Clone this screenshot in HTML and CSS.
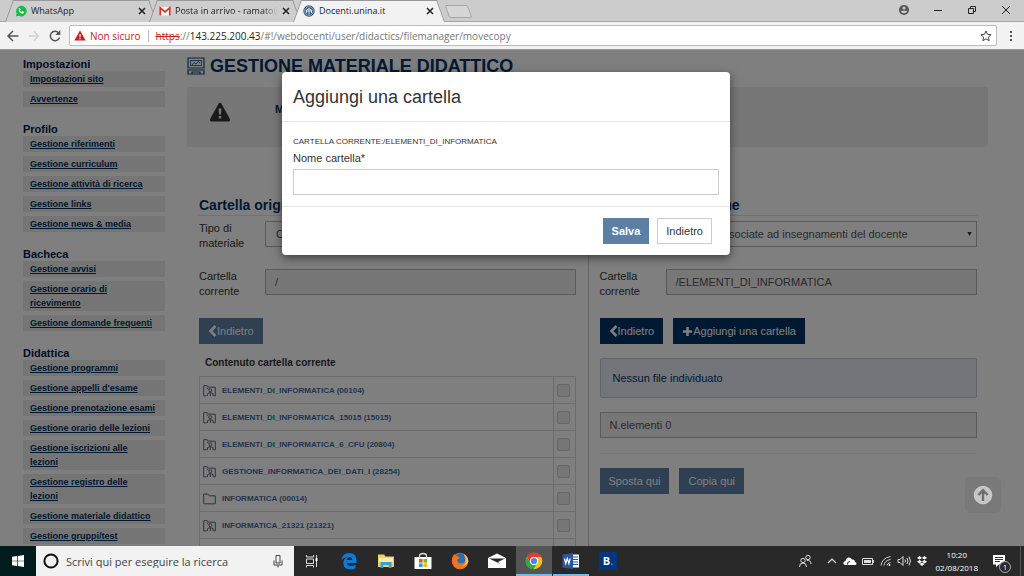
FILE: index.html
```html
<!DOCTYPE html>
<html lang="it">
<head>
<meta charset="utf-8">
<title>Docenti.unina.it</title>
<link rel="stylesheet" href="styles.css">
</head>
<body>
<svg class="defs" aria-hidden="true">
  <symbol id="x" viewBox="0 0 8 8"><path d="M1 1l6 6M7 1l-6 6" stroke="currentColor" stroke-width="1.5"/></symbol>
  <symbol id="folder" viewBox="0 0 13 13"><path d="M.7 11.8V2h4l1.300 1.800h6.300v8z" fill="none" stroke="currentColor"/></symbol>
  <symbol id="folder-user" viewBox="0 0 13 13"><path d="M3.500 11.800H.7V1.700h3.600l1 1.500h7v8.600h-1.800M4 3.500l1.300 2" fill="none" stroke="currentColor"/><circle cx="7.300" cy="6.200" r="1.500" fill="none" stroke="currentColor"/><path d="M4.500 12V9.700q2.800-2.500 5.600 0V12M7.300 8.500V12" fill="none" stroke="currentColor"/></symbol>
  <symbol id="chev" viewBox="0 0 9 12"><path d="M7.500 1L2.500 6l5 5" fill="none" stroke="currentColor" stroke-width="2.600"/></symbol>
</svg>
<div class="browser">
  <header class="tabs">
    <div class="tab">
      <svg class="fav" viewBox="0 0 12 12"><path d="M.8 11.500l.9-3A5.300 5.300 0 1 1 3.800 10.700z" fill="#12bf45"/><path d="M3.700 3.400l1-.5.9 1.700-.6.8q.5 1.200 1.700 1.600l.8-.8 1.600.9q-.3 1.700-2 1.500Q3.800 8 3.700 3.400z" fill="#fff"/></svg>
      <span class="tab-title">WhatsApp</span>
      <button class="tab-close" aria-label="Chiudi WhatsApp"><svg><use href="#x"/></svg></button>
    </div>
    <div class="tab">
      <svg class="fav" viewBox="0 0 12 12"><path d="M.5 2h11v8.500H.5z" fill="#f4f4f4"/><path d="M1.200 10.500V2.800L6 6.800l4.800-4v7.700" fill="none" stroke="#d8372b" stroke-width="1.700"/></svg>
      <span class="tab-title fade">Posta in arrivo - ramato@</span>
      <button class="tab-close" aria-label="Chiudi Posta in arrivo"><svg><use href="#x"/></svg></button>
    </div>
    <div class="tab active">
      <svg class="fav" viewBox="0 0 12 12"><circle cx="6" cy="6" r="5.700" fill="#34587c"/><circle cx="6" cy="6" r="4.300" fill="none" stroke="#b9cbdc" stroke-width=".7"/><path d="M3.500 8V5q2.500-2.500 5 0v3M6 3v6.500M4 6h4" fill="none" stroke="#dce6ef"/></svg>
      <span class="tab-title">Docenti.unina.it</span>
      <button class="tab-close" aria-label="Chiudi Docenti.unina.it"><svg><use href="#x"/></svg></button>
    </div>
    <button class="new-tab" aria-label="Nuova scheda"></button>
    <div class="window-controls">
      <button aria-label="Profilo"><svg viewBox="0 0 12 12"><circle cx="6" cy="6" r="5" fill="#555"/><circle cx="6" cy="4" r="1.500" fill="#ccc"/><path d="M2.800 6.800h6.400Q8.500 9.300 6 9.300T2.800 6.800z" fill="#ccc"/></svg></button>
      <button aria-label="Riduci"><svg viewBox="0 0 12 12"><path d="M2 6.500h8" stroke="#222"/></svg></button>
      <button aria-label="Ripristina"><svg viewBox="0 0 12 12"><path d="M2.500 4.500h5v5h-5zM4.500 4.500v-2h5v5h-2" fill="none" stroke="#222"/></svg></button>
      <button aria-label="Chiudi"><svg viewBox="0 0 12 12"><path d="M2 2l8 8M10 2l-8 8" stroke="#222"/></svg></button>
    </div>
  </header>
  <nav class="toolbar" aria-label="Navigazione">
    <button aria-label="Indietro"><svg viewBox="0 0 14 14"><path d="M12.500 7H2M7 2L2 7l5 5" fill="none" stroke="#555" stroke-width="1.500"/></svg></button>
    <button aria-label="Avanti"><svg viewBox="0 0 14 14"><path d="M2 7h9.500M7 2.500L11.500 7 7 11.500" fill="none" stroke="#d2d2d2" stroke-width="1.500"/></svg></button>
    <button aria-label="Ricarica"><svg viewBox="0 0 14 14"><path d="M11.500 8.500A4.700 4.700 0 1 1 10.500 3.800" fill="none" stroke="#555" stroke-width="1.500"/><path d="M12.300 1v5h-5z" fill="#555"/></svg></button>
    <div class="address">
      <svg class="warn" viewBox="0 0 12 11"><path d="M6 .5l5.700 10H.3z" fill="#c5221f"/><path d="M6 4v3.200M6 8v1.300" stroke="#fff" stroke-width="1.200"/></svg>
      <span class="insecure">Non sicuro</span>
      <span class="url"><s>https</s>://<b>143.225.200.43</b>/#!/webdocenti/user/didactics/filemanager/movecopy</span>
      <button class="star" aria-label="Preferiti"><svg viewBox="0 0 12 12"><path d="M6 1l1.500 3.300 3.600.4-2.700 2.400.8 3.600L6 8.900l-3.200 1.800.8-3.600L.9 4.700l3.600-.4z" fill="none" stroke="#444"/></svg></button>
    </div>
    <button class="menu" aria-label="Menu"><svg viewBox="0 0 14 14"><path d="M6 2h2v2H6zM6 6h2v2H6zM6 10h2v2H6z" fill="#555"/></svg></button>
  </nav>

  <div class="viewport">
    <div class="page">
      <aside class="sidebar">
        <h2>Impostazioni</h2>
        <ul><li><a href="#">Impostazioni sito</a></li><li><a href="#">Avvertenze</a></li></ul>
        <h2>Profilo</h2>
        <ul><li><a href="#">Gestione riferimenti</a></li><li><a href="#">Gestione curriculum</a></li><li><a href="#">Gestione attività di ricerca</a></li><li><a href="#">Gestione links</a></li><li><a href="#">Gestione news &amp; media</a></li></ul>
        <h2>Bacheca</h2>
        <ul><li><a href="#">Gestione avvisi</a></li><li><a href="#">Gestione orario di ricevimento</a></li><li><a href="#">Gestione domande frequenti</a></li></ul>
        <h2>Didattica</h2>
        <ul><li><a href="#">Gestione programmi</a></li><li><a href="#">Gestione appelli d'esame</a></li><li><a href="#">Gestione prenotazione esami</a></li><li><a href="#">Gestione orario delle lezioni</a></li><li><a href="#">Gestione iscrizioni alle lezioni</a></li><li><a href="#">Gestione registro delle lezioni</a></li><li><a href="#">Gestione materiale didattico</a></li><li><a href="#">Gestione gruppi/test</a></li></ul>
      </aside>
      <main class="main">
        <h1><svg viewBox="0 0 18 18"><path d="M1 1h16v10H1zM1 13h16v4H1zM5 17v-2h8v2" fill="none" stroke="#1f497d" stroke-width="1.200"/><path d="M3.500 3.500h11v5h-11zM5 8l2-2.500L9 7l2-2.500L13 6" fill="none" stroke="#1f497d" stroke-width=".8"/></svg>GESTIONE MATERIALE DIDATTICO</h1>
        <div class="notice">
          <svg viewBox="0 0 22 20"><path d="M11 .7q.9 0 1.500 1l8.500 15.500q.8 2-1.200 2.200H2.200Q.2 19.200 1 17.200L9.500 1.700q.6-1 1.500-1z" fill="#333"/><path d="M9.600 6.500h2.800l-.4 6h-2zM9.800 14h2.400v2.400H9.800z" fill="#eee"/></svg>
          <strong>M</strong>
        </div>
        <div class="columns">
          <section class="col">
            <h3>Cartella origine</h3>
            <div class="field"><label for="t1">Tipo di materiale</label><select id="t1"><option>Cartelle associate ad insegnamenti del docente</option></select></div>
            <div class="field"><label for="c1">Cartella corrente</label><input id="c1" type="text" value="/" readonly></div>
            <div class="actions"><button class="btn soft"><svg class="chev"><use href="#chev"/></svg>Indietro</button></div>
            <table class="files">
              <caption>Contenuto cartella corrente</caption>
              <tbody>
              <tr><td><a href="#"><svg><use href="#folder-user"/></svg>ELEMENTI_DI_INFORMATICA (00104)</a></td><td><input type="checkbox" disabled aria-label="ELEMENTI_DI_INFORMATICA"></td></tr>
              <tr><td><a href="#"><svg><use href="#folder-user"/></svg>ELEMENTI_DI_INFORMATICA_15015 (15015)</a></td><td><input type="checkbox" disabled aria-label="ELEMENTI_DI_INFORMATICA_15015"></td></tr>
              <tr><td><a href="#"><svg><use href="#folder-user"/></svg>ELEMENTI_DI_INFORMATICA_6_CFU (20804)</a></td><td><input type="checkbox" disabled aria-label="ELEMENTI_DI_INFORMATICA_6_CFU"></td></tr>
              <tr><td><a href="#"><svg><use href="#folder-user"/></svg>GESTIONE_INFORMATICA_DEI_DATI_I (28254)</a></td><td><input type="checkbox" disabled aria-label="GESTIONE_INFORMATICA_DEI_DATI_I"></td></tr>
              <tr><td><a href="#"><svg><use href="#folder"/></svg>INFORMATICA (00014)</a></td><td><input type="checkbox" disabled aria-label="INFORMATICA"></td></tr>
              <tr><td><a href="#"><svg><use href="#folder-user"/></svg>INFORMATICA_21321 (21321)</a></td><td><input type="checkbox" disabled aria-label="INFORMATICA_21321"></td></tr>
              <tr><td></td><td></td></tr>
              </tbody>
            </table>
          </section>
          <section class="col">
            <h3>Cartella destinazione</h3>
            <div class="field"><label for="t2">Tipo di materiale</label><select id="t2"><option>Cartelle associate ad insegnamenti del docente</option></select></div>
            <div class="field"><label for="c2">Cartella corrente</label><input id="c2" type="text" value="/ELEMENTI_DI_INFORMATICA" readonly></div>
            <div class="actions"><button class="btn dark"><svg class="chev"><use href="#chev"/></svg>Indietro</button><button class="btn dark"><svg class="plus" viewBox="0 0 11 11"><path d="M5.500 1v9M1 5.500h9" stroke="currentColor" stroke-width="2.600"/></svg>Aggiungi una cartella</button></div>
            <p class="info">Nessun file individuato</p>
            <p class="count">N.elementi 0</p>
            <div class="actions final"><button class="btn soft">Sposta qui</button><button class="btn soft">Copia qui</button></div>
          </section>
        </div>
      </main>
    </div>
    <div class="overlay">
      <form class="modal" role="dialog" aria-labelledby="mt">
        <h2 id="mt">Aggiungi una cartella</h2>
        <div class="modal-body">
          <p>CARTELLA CORRENTE:/ELEMENTI_DI_INFORMATICA</p>
          <label for="nome">Nome cartella*</label>
          <input id="nome" type="text">
        </div>
        <div class="modal-footer"><button type="button" class="btn save">Salva</button><button type="button" class="btn plain">Indietro</button></div>
      </form>
    </div>
    <a class="to-top" href="#" aria-label="Torna su"><svg viewBox="0 0 20 20"><circle cx="10" cy="10" r="9.300" fill="#c6c6c6"/><path d="M10 16V5.500M5.300 10L10 5.300l4.700 4.700" fill="none" stroke="#6e6e6e" stroke-width="2.400"/></svg></a>
  </div>
</div>

<footer class="taskbar">
  <button class="start" aria-label="Start"><svg viewBox="0 0 12 12"><path d="M0 1.800l5.200-.7v4.600H0zM5.900 1L12 .1v5.600H5.900zM0 6.300h5.200v4.600L0 10.200zM5.900 6.300H12v5.600L5.900 11z" fill="#fff"/></svg></button>
  <label class="search">
    <svg class="cortana" viewBox="0 0 16 16"><circle cx="8" cy="8" r="6.600" fill="none" stroke="#111" stroke-width="2"/></svg>
    <input type="text" placeholder="Scrivi qui per eseguire la ricerca" aria-label="Cerca">
    <svg class="mic" viewBox="0 0 10 14"><path d="M3 1.500h4v7.500H3zM1 6.500V11h8V6.500M5 11v2.500" fill="none" stroke="#444"/></svg>
  </label>
  <div class="apps">
    <button aria-label="Visualizzazione attività"><svg viewBox="0 0 20 20"><path d="M4.500 4v2h7V4M4.500 8h7v4.500h-7zM4.500 16.500v-2h7v2M14.500 4v12" fill="none" stroke="#ddd"/><path d="M13.500 7h2v3h-2z" fill="#fff"/></svg></button>
    <button aria-label="Edge"><svg viewBox="0 0 20 20"><path d="M2.500 9Q3.500 2 10.200 2 17.500 2 17.500 9.500V12H7.800q.4 3 4 3 2.700 0 4.700-1.200v3.400Q14.500 18.500 11.500 18.500 4.500 18.500 4.300 12 4.300 8 8 6 4.500 6.300 2.500 9zM7.900 9h5.400Q13.200 6 10.600 6 8.200 6 7.900 9z" fill="#0c7bd8"/></svg></button>
    <button aria-label="Esplora file"><svg viewBox="0 0 20 20"><path d="M2 3.500h6l1.500 2H18V16H2z" fill="#f5ce62"/><path d="M3 7h14v4H3z" fill="#fce9ab"/><path d="M4.500 11h11v6h-2.800v-3H7.300v3H4.500z" fill="#35a0dd"/></svg></button>
    <button aria-label="Store"><svg viewBox="0 0 20 20"><path d="M1.500 6h17v12h-17z" fill="#fff"/><path d="M6.500 7V5q0-2.500 3.500-2.500T13.500 5v2" fill="none" stroke="#ddd" stroke-width="1.300"/><path d="M6 8h3.600v3.600H6z" fill="#e8502a"/><path d="M10.400 8H14v3.600h-3.600z" fill="#7eb900"/><path d="M6 12.400h3.600V16H6z" fill="#1fa3e8"/><path d="M10.400 12.400H14V16h-3.600z" fill="#fbb900"/></svg></button>
    <button aria-label="Firefox"><svg viewBox="0 0 20 20"><circle cx="10" cy="10" r="8.300" fill="#e8561b"/><circle cx="10.500" cy="8.500" r="6" fill="#2a6eb5"/><path d="M1.900 8Q3 4 4.500 3q.5 2 3 2.200L9.500 7 7 9q1 4 5 3.500 3-.5 3.500-4.500L14 3Q18.300 6 18.300 10.500 17 18.300 10 18.300T1.900 8z" fill="#ee7420"/><path d="M14 3Q18.300 6 18.300 10.500q-1.500 4.500-6.300 4.700 4.500-2 3.500-7.200z" fill="#fbc43a"/></svg></button>
    <button aria-label="Posta"><svg viewBox="0 0 20 20"><path d="M1 7l9-4.500L19 7v10H1z" fill="#fff"/><path d="M2 7.500h16l-7 3.500 2.500 2z" fill="#292929"/></svg></button>
    <button class="running current" aria-label="Chrome"><svg viewBox="0 0 20 20"><circle cx="10" cy="10" r="8.300" fill="#fbc116"/><path d="M2.800 5.900A8.300 8.300 0 0 1 17.200 6H10a4 4 0 0 0-3.500 6z" fill="#e33b2e"/><path d="M2.800 5.900A8.300 8.300 0 0 0 9.500 18.300L13.400 12a4 4 0 0 1-6.900 0z" fill="#2da94f"/><circle cx="10" cy="10" r="4" fill="#fff"/><circle cx="10" cy="10" r="3.100" fill="#4285f4"/></svg></button>
    <button class="running" aria-label="Word"><svg viewBox="0 0 20 20"><path d="M10 3.500h8v13h-8z" fill="#fff"/><path d="M12 6h5M12 8.500h5M12 11h5M12 13.500h5" stroke="#2b579a"/><path d="M1.500 3.500L12 2v16L1.500 16.500z" fill="#2b579a"/><path d="M3.500 7.500l1.200 5 1.600-5 1.600 5 1.300-5" fill="none" stroke="#fff" stroke-width="1.200"/></svg></button>
    <button aria-label="Booking"><span class="booking">B<i>.</i></span></button>
  </div>
  <div class="tray">
    <svg class="people" viewBox="0 0 16 16"><circle cx="6" cy="7.500" r="2.200" fill="none" stroke="#ddd"/><circle cx="11" cy="4.500" r="2.200" fill="none" stroke="#ddd"/><path d="M2.500 14q0-4 3.500-4t3.500 4M10 7.500q3.800-.5 4 3.500" fill="none" stroke="#ddd"/></svg>
    <svg viewBox="0 0 16 16"><path d="M4 10l4-4 4 4" fill="none" stroke="#ddd" stroke-width="1.200"/></svg>
    <svg viewBox="0 0 16 16"><path d="M3.500 12Q1 11.500 1.500 9.500 2 8 3.500 8 4 4.500 7 4.500q2 0 3 2 3-.3 3 2.500 2 .3 1.500 2-.5 1-1.500 1z" fill="#fff"/><path d="M5.500 11.500Q5 8.500 8 8.500" fill="none" stroke="#292929"/></svg>
    <svg viewBox="0 0 16 16"><path d="M2.500 5.500h10v6h-10zM13.500 7v3" fill="none" stroke="#ddd"/><path d="M4 7h7v3H4z" fill="#ddd"/></svg>
    <svg viewBox="0 0 16 16"><path d="M3 12.500Q4 5 12.500 3.500M6 12.500q.5-5 6.500-6M9 12.500q.3-2.500 3.500-3" fill="none" stroke="#ccc"/><circle cx="11.500" cy="12" r="1" fill="#ddd"/></svg>
    <svg viewBox="0 0 16 16"><path d="M2 6.500h2l3-3v9l-3-3H2zM9 6.500q1 1.500 0 3M11 5q2 3 0 6M13 3.500q3 4.500 0 9" fill="none" stroke="#ddd"/></svg>
    <svg viewBox="0 0 16 16"><path d="M5.500 3L8 5 5.500 6.600 3 5zM10.500 3L13 5l-2.500 1.600L8 5zM5.500 7L8 8.600l-2.500 1.800L3 8.800zM10.500 7L13 8.800l-2.500 1.600L8 8.600zM5.500 11L8 9.600l2.500 1.400L8 13z" fill="#fff"/></svg>
    <time class="clock" datetime="2018-08-02T10:20">10:20<br>02/08/2018</time>
    <button class="notifications" aria-label="Notifiche"><svg viewBox="0 0 14 14"><path d="M1 1h12v9.500H7L4 13v-2.500H1z" fill="#fff"/><path d="M3 3.500h8M3 5.500h8M3 7.500h5" stroke="#333"/></svg><span>1</span></button>
  </div>
</footer>
</body>
</html>
```

FILE: styles.css
```css
* { box-sizing: border-box; }
body { margin: 0; height: 100vh; display: flex; flex-direction: column; overflow: hidden; font: 11px/15px "Liberation Sans", Arial, sans-serif; color: #333; }
button { padding: 0; border: 0; background: none; font: inherit; color: inherit; }
input, select { font: inherit; color: inherit; }
h1, h2, h3, p, ul { margin: 0; padding: 0; }
svg { display: block; flex: none; }
.defs { position: absolute; width: 0; height: 0; }
.browser { flex: 1; min-height: 0; display: flex; flex-direction: column; }

/* Browser chrome */
.tabs { display: flex; height: 22px; padding-left: 9px; background: #ccc; border-bottom: 1px solid #a5a5a5; font: 9px/20px "Open Sans", "Noto Sans", sans-serif; color: #222; }
.tab { position: relative; isolation: isolate; display: flex; align-items: center; gap: 4px; flex: 0 1 144px; min-width: 0; height: 22px; padding: 0 7px 0 6px; }
.tab::before, .tab::after { content: ""; position: absolute; z-index: -1; inset: 0 40% 0 0; background: #cecece; border: 1px solid #999; border-right: 0; border-bottom: 0; transform: skewX(-20deg); }
.tab::after { inset: 0 0 0 40%; border: 1px solid #999; border-left: 0; border-bottom: 0; transform: skewX(20deg); }
.tab.active { z-index: 1; }
.tab.active::before, .tab.active::after { background: #f2f2f2; }
.fav { width: 12px; height: 12px; }
.tab-title { flex: 1; overflow: hidden; white-space: nowrap; }
.fade { mask-image: linear-gradient(90deg, #000 85%, transparent); }
.tab-close svg { width: 8px; height: 8px; }
.new-tab { width: 23px; height: 13px; margin: 5px 0 0 6px; background: #d6d6d6; border: 1px solid #a8a8a8; border-radius: 2px; transform: skewX(20deg); }
.window-controls { display: flex; align-items: center; gap: 22px; margin-left: auto; padding-right: 12px; height: 20px; }
.window-controls svg { width: 12px; height: 12px; }
.toolbar { display: flex; align-items: center; gap: 7px; height: 28px; padding: 0 6px; background: #f2f2f2; border-bottom: 1px solid #999; }
.toolbar svg { width: 14px; height: 14px; }
.address { flex: 1; min-width: 0; display: flex; align-items: center; height: 21px; padding: 0 4px; background: #fff; border: 1px solid #bbb; border-radius: 2px; font: 10px/18px "Open Sans", "Noto Sans", sans-serif; color: #777; white-space: nowrap; }
.toolbar .warn { width: 12px; height: 11px; }
.insecure { margin-left: 4px; padding-right: 7px; border-right: 1px solid #bbb; line-height: 12px; color: #c5221f; }
.url { flex: 1; padding-left: 7px; overflow: hidden; }
.url s { color: #c5221f; }
.url b { font-weight: 400; color: #222; }
.toolbar .star svg { width: 12px; height: 12px; }

/* Page */
.viewport { position: relative; flex: 1; min-height: 0; overflow: hidden; background: #fff; }
.page { display: flex; gap: 22px; padding: 7px 36px 0 23px; }
.sidebar { flex: 0 0 142px; font-size: 9px; font-weight: 700; line-height: 14px; }
.sidebar h2 { font-size: 11px; line-height: 14px; color: #002147; }
.sidebar ul { display: grid; gap: 4px; margin-bottom: 15px; list-style: none; }
.sidebar li { padding: 1px 7px; background: #ebebeb; }
.sidebar a { color: #00305f; text-decoration: underline; }
.main { flex: 1; min-width: 0; }
h1 { display: flex; align-items: center; gap: 5px; height: 18px; margin-bottom: 12px; font-size: 18px; line-height: 18px; color: #003366; }
h1 svg { width: 18px; height: 18px; }
.notice { display: flex; align-items: flex-start; gap: 44px; height: 60px; padding: 15px 22px; border-radius: 3px; background: #eee; color: #003366; }
.notice svg { width: 22px; height: 20px; }
.columns { display: grid; grid-template-columns: 1fr 1fr; margin-top: 48px; }
.col { min-width: 0; padding: 0 12px; }
.col + .col { border-left: 1px solid #ccc; padding: 0 11px; }
h3 { height: 21px; margin-bottom: 5px; border-bottom: 1px solid #e3e3e3; font-size: 14px; line-height: 20px; color: #003366; }
.field { display: grid; grid-template-columns: 66px 1fr; height: 30px; margin-bottom: 18px; }
.field label { padding-right: 16px; }
.field select, .field input, .count { height: 26px; min-width: 0; padding: 0 9px; border: 1px solid #b5b5b5; border-radius: 0; color: #555; }
.field select { appearance: none; padding-left: 10px; background: #fff; }
.field:has(select) { position: relative; }
.field:has(select)::after { content: "▼"; position: absolute; right: 4px; top: 5px; font-size: 7px; }
.field input, .count { background: #eee; }
.actions { display: flex; gap: 10px; padding-top: 1px; }
.btn { display: flex; align-items: center; height: 26px; padding: 0 8px; border: 1px solid transparent; }
.soft { background: #5c80a5; color: #fff; }
.dark { background: #003366; color: #fff; }
.chev { width: 9px; height: 12px; }
.plus { width: 11px; height: 11px; }
.files { width: 100%; margin-top: 11px; border-collapse: collapse; font-size: 8px; }
.files caption { height: 21px; padding-left: 6px; text-align: left; font-size: 10px; font-weight: 700; line-height: 15px; }
.files td { height: 27px; padding: 0 3px; border: 1px solid #d8d8d8; }
.files td + td { width: 22px; }
.files a { display: flex; align-items: center; gap: 6px; color: #3f6d9c; text-decoration: none; font-weight: 700; }
.files svg { width: 13px; height: 13px; color: #667; }
.files input { appearance: none; display: block; width: 13px; height: 13px; margin: 0; border: 1px solid #ccc; border-radius: 2px; background: #ececec; }
.info { height: 40px; margin: 14px 0; padding: 0 12px; border: 1px solid #c1c9d6; border-radius: 2px; background: #e8ebf5; line-height: 38px; color: #003366; }
.count { line-height: 24px; }
.final { margin-top: 15px; padding-top: 14px; border-top: 1px solid #eee; }
.to-top { position: absolute; right: 23px; bottom: 33px; padding: 8px; border-radius: 6px; background: #797979; }
.to-top svg { width: 20px; height: 20px; }

/* Dialog */
.overlay { position: absolute; inset: 0; display: flex; justify-content: center; align-items: flex-start; padding: 22px 12px 0 0; background: rgb(0 0 0 / 50%); }
.modal { width: 448px; max-width: 100%; background: #fff; border-radius: 4px; box-shadow: 0 3px 10px rgb(0 0 0 / 50%); }
.modal h2 { padding: 13px 11px 12px; border-bottom: 1px solid #e5e5e5; font-size: 18px; font-weight: 400; line-height: 24px; }
.modal-body { display: grid; padding: 12px 11px 11px; border-bottom: 1px solid #e5e5e5; }
.modal-body p { margin-bottom: 2px; font-size: 8px; }
.modal-body label { margin-bottom: 3px; }
.modal-body input { width: 100%; height: 26px; padding: 0 9px; border: 1px solid #ccc; }
.modal-footer { display: flex; justify-content: flex-end; gap: 8px; padding: 11px 18px 11px; }
.save { background: #5c80a5; color: #fff; font-weight: 700; }
.plain { border-color: #ccc; background: #fff; }

/* Taskbar */
.taskbar { display: flex; flex: none; height: 30px; background: #292929; color: #fff; font: 9px/13px "Open Sans", "Noto Sans", sans-serif; }
.start { display: grid; place-items: center; width: 36px; background: #001c1c; }
.start svg { width: 12px; height: 12px; }
.search { display: flex; align-items: center; flex: 0 1 258px; padding: 0 11px 0 7px; background: #f2f2f2; }
.search input { flex: 1; min-width: 0; padding: 0; margin-left: 7px; border: 0; background: none; font-size: 11px; }
.search input::placeholder { color: #444; opacity: 1; }
.cortana { width: 16px; height: 16px; }
.mic { width: 10px; height: 14px; }
.apps { display: flex; gap: 1px; }
.apps button { display: grid; place-items: center; width: 36px; border-bottom: 2px solid transparent; border-top: 2px solid transparent; }
.apps svg { width: 20px; height: 20px; }
.apps .running { border-bottom-color: #76b9ed; }
.apps .current { background: #555; border-top-color: #555; }
.booking { width: 18px; height: 18px; background: #003580; font-size: 11px; font-weight: 700; line-height: 18px; }
.booking i { color: #009fe3; font-style: normal; }
.tray { display: flex; align-items: center; gap: 2px; margin-left: auto; padding-right: 3px; }
.tray > svg { width: 16px; height: 16px; }
.tray .people { margin-right: 9px; }
.clock { margin-left: 4px; font-size: 8px; text-align: center; }
.notifications { position: relative; margin-left: 12px; padding-right: 14px; border-right: 1px solid #555; height: 30px; }
.notifications svg { width: 14px; height: 14px; }
.notifications span { position: absolute; right: 9px; bottom: 3px; width: 12px; height: 12px; border: 1px solid #aaa; border-radius: 50%; background: #292929; font-size: 8px; line-height: 10px; }
```
